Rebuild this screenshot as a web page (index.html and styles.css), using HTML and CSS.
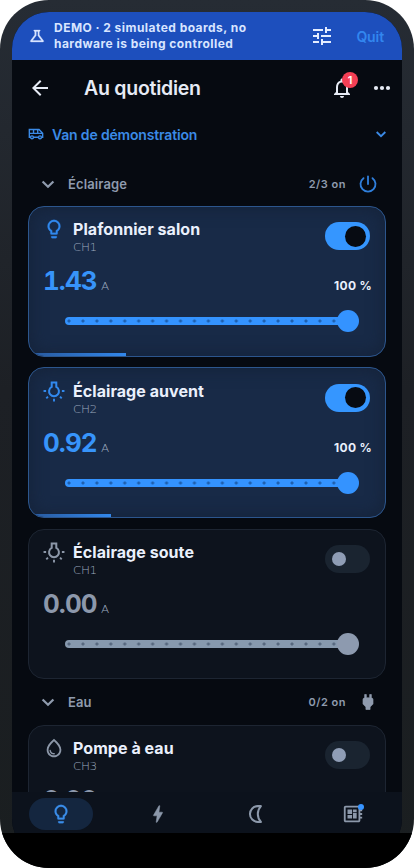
FILE: index.html
```
<!DOCTYPE html>
<html lang="fr">
<head>
<meta charset="utf-8">
<title>Au quotidien</title>
<link rel="stylesheet" href="styles.css">
</head>
<body>
<svg width="0" height="0" class="defs">
  <symbol id="bulb" viewBox="0 0 24 24"><path d="M12,2A7,7 0 0,1 19,9C19,11.38 17.81,13.47 16,14.74V17A1,1 0 0,1 15,18H9A1,1 0 0,1 8,17V14.74C6.19,13.47 5,11.38 5,9A7,7 0 0,1 12,2M9,21V20H15V21A1,1 0 0,1 14,22H10A1,1 0 0,1 9,21M12,4A5,5 0 0,0 7,9C7,11.05 8.23,12.81 10,13.58V16H14V13.58C15.77,12.81 17,11.05 17,9A5,5 0 0,0 12,4Z" stroke="currentColor" stroke-width=".3"/></symbol>
  <symbol id="lamp" viewBox="0 0 24 24"><path d="M9.5 2.6V7.6A5.4 5.4 0 1 0 14.5 7.6V2.6Z" fill="none" stroke="currentColor" stroke-width="2.2"/><path d="M.6 12H3.4M20.6 12H23.4M12 20.4V23.4M5.4 18.2L3.6 20M18.6 18.2L20.4 20" fill="none" stroke="currentColor" stroke-width="2.1"/></symbol>
  <symbol id="drop" viewBox="0 0 24 24"><path d="M12 2c-5.33 4.55-8 8.48-8 11.8 0 4.98 3.8 8.2 8 8.2s8-3.22 8-8.2c0-3.32-2.67-7.25-8-11.8zm0 18c-3.35 0-6-2.57-6-6.2 0-2.34 1.95-5.44 6-9.14 4.05 3.7 6 6.79 6 9.14 0 3.63-2.65 6.2-6 6.2zm-4.17-6c.37 0 .67.26.74.62.41 2.22 2.28 2.98 3.64 2.87.43-.02.79.32.79.75 0 .4-.32.73-.72.75-2.13.13-4.62-1.09-5.19-4.12-.08-.45.28-.87.74-.87z"/></symbol>
  <symbol id="chevron" viewBox="0 0 24 24"><path d="M5.5 9L12 15.3L18.5 9" fill="none" stroke="currentColor" stroke-width="2.7"/></symbol>
</svg>
<div class="phone">
  <div class="screen">
    <div class="banner">
      <svg class="flask" viewBox="0 0 24 24"><path d="M13 11.33L18 18H6l5-6.67V6h2m2.96-2H8.04c-.42 0-.65.48-.39.81L9 6.5v4.17L3.2 18.4c-.49.66-.02 1.6.8 1.6h16c.82 0 1.29-.94.8-1.6L15 10.67V6.5l1.35-1.69c.26-.33.03-.81-.39-.81z" stroke="currentColor" stroke-width=".4"/></svg>
      <div class="banner-text">DEMO · 2 simulated boards, no<br>hardware is being controlled</div>
      <svg class="tune" viewBox="0 0 24 24"><path d="M3 17v2h6v-2H3zM3 5v2h10V5H3zm10 16v-2h8v-2h-8v-2h-2v6h2zM7 9v2H3v2h4v2h2V9H7zm14 4v-2H11v2h10zm-6-4h2V7h4V5h-4V3h-2v6z"/></svg>
      <span class="quit">Quit</span>
    </div>
    <header class="topbar">
      <svg class="back" viewBox="0 0 24 24"><path d="M20 11H7.83l5.59-5.59L12 4l-8 8 8 8 1.41-1.41L7.83 13H20v-2z"/></svg>
      <h1>Au quotidien</h1>
      <div class="bell">
        <svg viewBox="0 0 24 24"><path d="M12 22c1.1 0 2-.9 2-2h-4c0 1.1.89 2 2 2zm6-6v-5c0-3.07-1.64-5.64-4.5-6.32V4c0-.83-.67-1.5-1.5-1.5s-1.5.67-1.5 1.5v.68C7.63 5.36 6 7.92 6 11v5l-2 2v1h16v-1l-2-2zm-2 1H8v-6c0-2.48 1.51-4.5 4-4.5s4 2.02 4 4.5v6z"/></svg>
        <span class="badge">1</span>
      </div>
      <svg class="more" viewBox="0 0 24 24"><circle cx="6" cy="12" r="2.1"/><circle cx="12" cy="12" r="2.1"/><circle cx="18" cy="12" r="2.1"/></svg>
    </header>
    <div class="van">
      <svg class="van-icon" viewBox="0 0 24 24"><g fill="none" stroke="currentColor" stroke-width="2.1"><path d="M3.6 16.8H2V5.2H16.5L22 11V16.8H20.4M8.6 16.8H15.4M2 11H22M8.3 5.2V11M14.6 5.2V11"/><circle cx="6" cy="17" r="2.2"/><circle cx="18" cy="17" r="2.2"/></g></svg>
      <span>Van de démonstration</span>
      <svg class="van-chev"><use href="#chevron"/></svg>
    </div>
    <main>
      <div class="section">
        <svg class="chev"><use href="#chevron"/></svg><span class="name">Éclairage</span><span class="count">2/3 on</span>
        <svg class="act blue" viewBox="0 0 24 24"><path d="M12 2.8V12M6.6 5A9 9 0 1 0 17.4 5" fill="none" stroke="currentColor" stroke-width="2.2" stroke-linecap="round"/></svg>
      </div>
      <div class="card on">
        <div class="head"><svg class="ico"><use href="#bulb"/></svg><div class="titles"><div class="title">Plafonnier salon</div><div class="ch">CH1</div></div><div class="toggle"><i></i></div></div>
        <div class="read"><b>1.43</b><span class="unit">A</span><span class="pct">100 %</span></div>
        <div class="slider"><div class="track"></div><div class="thumb"></div></div>
        <div class="bar" style="width:97px"></div>
      </div>
      <div class="card on">
        <div class="head"><svg class="ico"><use href="#lamp"/></svg><div class="titles"><div class="title">Éclairage auvent</div><div class="ch">CH2</div></div><div class="toggle"><i></i></div></div>
        <div class="read"><b>0.92</b><span class="unit">A</span><span class="pct">100 %</span></div>
        <div class="slider"><div class="track"></div><div class="thumb"></div></div>
        <div class="bar" style="width:82px"></div>
      </div>
      <div class="card">
        <div class="head"><svg class="ico"><use href="#lamp"/></svg><div class="titles"><div class="title">Éclairage soute</div><div class="ch">CH1</div></div><div class="toggle"><i></i></div></div>
        <div class="read"><b>0.00</b><span class="unit">A</span></div>
        <div class="slider"><div class="track"></div><div class="thumb"></div></div>
      </div>
      <div class="section second">
        <svg class="chev"><use href="#chevron"/></svg><span class="name">Eau</span><span class="count">0/2 on</span>
        <svg class="act" viewBox="0 0 24 24"><path d="M16.01 7L16 3h-2v4h-4V3H8v4h-.01C7 6.99 6 7.99 6 8.99v5.49L9.5 18v3h5v-3l3.5-3.51v-5.5c0-1-1-2-1.99-1.99z" stroke="currentColor" stroke-width=".8"/></svg>
      </div>
      <div class="card">
        <div class="head"><svg class="ico"><use href="#drop"/></svg><div class="titles"><div class="title">Pompe à eau</div><div class="ch">CH3</div></div><div class="toggle"><i></i></div></div>
        <div class="read"><b>0.00</b></div>
      </div>
    </main>
    <nav>
      <div class="tab"><span class="pill"><svg><use href="#bulb"/></svg></span></div>
      <div class="tab"><svg viewBox="0 0 24 24"><path d="M11 21h-1l1-7H7.5c-.88 0-.33-.75-.31-.78C8.48 10.94 10.42 7.54 13.01 3h1l-1 7h3.51c.4 0 .62.19.4.66C12.97 17.55 11 21 11 21z" stroke="currentColor" stroke-width=".6"/></svg></div>
      <div class="tab"><svg viewBox="0 0 24 24"><path d="M17.4 3.4H14A8.6 8.6 0 0 0 14 20.6H17.4A12.5 12.5 0 0 1 17.4 3.4Z" fill="none" stroke="currentColor" stroke-width="2.2" stroke-linejoin="round"/></svg></div>
      <div class="tab"><span class="board"><svg viewBox="0 0 24 24"><path d="M22 9V7h-2V5c0-1.1-.9-2-2-2H4c-1.1 0-2 .9-2 2v14c0 1.1.9 2 2 2h14c1.1 0 2-.9 2-2v-2h2v-2h-2v-2h2v-2h-2V9h2zm-4 10H4V5h14v14zM6 13h5v4H6zM12 7h4v3h-4zM6 7h5v5H6zM12 11h4v6h-4z"/></svg><i class="dot"></i></span></div>
    </nav>
  </div>
  <div class="base"></div>
</div>
</body>
</html>
```
FILE: styles.css
```
* { box-sizing: border-box; }
body { margin: 0; background: #fff; font-family: Inter, "Liberation Sans", sans-serif; }
svg { fill: currentColor; flex: none; display: block; }
.defs { position: absolute; }
.phone { position: relative; width: 414px; height: 868px; padding: 12px; border-radius: 49px; overflow: hidden; background: linear-gradient(180deg, #262c34 0%, #1d2025 45%, #1a1e20 100%); }
.screen { height: 844px; border-radius: 37px; overflow: hidden; background: #060a11; display: flex; flex-direction: column; color: #e6ebf5; }
.base { position: absolute; left: 0; right: 0; bottom: 0; height: 35px; background: #000; }

.banner { height: 48px; flex: none; background: #1d4fbd; display: flex; align-items: center; padding: 0 18px 0 16px; color: #d8e5ff; }
.flask { width: 18px; height: 18px; }
.banner-text { margin-left: 8px; font-size: 12px; font-weight: 700; line-height: 16px; letter-spacing: .46px; flex: 1; white-space: nowrap; }
.tune { width: 24px; height: 24px; margin-right: 22px; color: #e4edff; }
.quit { color: #3286ef; font-size: 14px; font-weight: 600; letter-spacing: -.1px; }

.topbar { height: 56px; flex: none; display: flex; align-items: center; padding: 0 8px 0 16px; }
.back { width: 24px; height: 24px; }
h1 { margin: 0 0 0 32px; font-size: 19.5px; font-weight: 600; flex: 1; letter-spacing: -.25px; }
.bell { position: relative; margin-right: 16px; }
.bell svg { width: 24px; height: 24px; }
.badge { position: absolute; left: 12px; top: -4px; width: 16px; height: 16px; border-radius: 50%; background: #f43f55; color: #fff; font-size: 11px; font-weight: 600; line-height: 16px; text-align: center; }
.more { width: 24px; height: 24px; }

.van { height: 36px; flex: none; display: flex; align-items: center; padding: 0 13px 0 16px; color: #3b8ae6; font-size: 14px; font-weight: 600; }
.van span { margin-left: 8px; flex: 1; letter-spacing: -.17px; }
.van-icon { width: 16px; height: 16px; }
.van-chev { width: 16px; height: 16px; }

main { flex: none; height: 640px; overflow: hidden; padding: 10px 16px 0; }
.section { height: 44px; display: flex; align-items: center; padding: 0 8px 0 10px; color: #8f9bae; }
.section.second { height: 46px; }
.chev { width: 20px; height: 20px; }
.name { margin-left: 10px; flex: 1; font-size: 13px; font-weight: 600; letter-spacing: .12px; }
.count { font-size: 11px; font-weight: 600; letter-spacing: .5px; margin-right: 12px; }
.act { width: 20px; height: 20px; }
.act.blue { color: #2f7fdc; }

.card { position: relative; height: 150.5px; border: 1px solid #1d2532; border-radius: 16px; background: #0d131d; overflow: hidden; padding: 11.3px 13px 0 14px; }
main > .card + .card { margin-top: 10.8px; }
.card.on { border-color: #2c568d; background: #182a47; box-shadow: inset 0 0 16px 2px #15233a; }
.ico { width: 22px; height: 22px; color: #8c97a8; }
.on .ico { color: #3189ee; }
.head { display: flex; align-items: flex-start; height: 45px; }
.titles { margin-left: 8px; flex: 1; }
.title { font-size: 16px; font-weight: 700; line-height: 22px; letter-spacing: .06px; color: #eaf0fc; white-space: nowrap; }
.ch, .unit { font-family: "DejaVu Sans Light", "DejaVu Sans", sans-serif; font-weight: 200; font-size: 10px; color: #9ba8bd; transform: scaleX(1.2); transform-origin: 0 50%; }
.ch { line-height: 14px; width: 30px; margin-top: 1px; letter-spacing: -.4px; }
.toggle { width: 45px; height: 28px; margin: 4px 2px 0 0; border-radius: 14px; background: #1a2430; display: flex; align-items: center; padding-left: 7px; }
.toggle i { width: 14px; height: 14px; border-radius: 50%; background: #8f9db5; }
.on .toggle { background: #3596ff; justify-content: flex-end; padding: 0 4px 0 0; }
.on .toggle i { width: 21px; height: 21px; background: #070b12; }
.read { display: flex; align-items: baseline; height: 36px; line-height: 36px; }
.read b { font-size: 26px; font-weight: 650; color: #8c98ab; width: 57.5px; font-variant-numeric: tabular-nums; letter-spacing: -.95px; }
.on .read b { color: #3794fa; }
.pct { margin-left: auto; font-size: 12px; font-weight: 700; letter-spacing: .3px; color: #eaf0fc; }
.slider { height: 22px; margin: 11.2px 13px 0 22px; display: flex; align-items: center; }
.track { flex: 1; height: 8px; border-radius: 4px 0 0 4px; background: radial-gradient(circle at 4px 4px, #56677e 1.2px, transparent 1.9px) 0 0 / 13.95px 8px, #8799ae; margin-right: -8px; }
.thumb { width: 22px; height: 22px; border-radius: 50%; background: #8d9aaf; }
.on .track { background: radial-gradient(circle at 4px 4px, #1e5fae 1.2px, transparent 1.9px) 0 0 / 13.95px 8px, #3493ff; }
.on .thumb { background: #3493ff; }
.bar { position: absolute; left: 0; bottom: 0; height: 3px; background: linear-gradient(90deg, #28589b, #3288ec); }

nav { height: 41px; flex: none; display: flex; background: #0c121c; color: #8c98aa; padding-top: 3px; margin-bottom: 23px; }
.tab { flex: 1; display: flex; justify-content: center; align-items: center; height: 38px; }
.tab svg { width: 22px; height: 22px; }
.pill { width: 64px; height: 32px; border-radius: 16px; background: #14263f; display: flex; align-items: center; justify-content: center; color: #3b8eea; }
.board { position: relative; }
.dot { position: absolute; right: 0; top: 1px; width: 6px; height: 6px; border-radius: 50%; background: #3794ff; }
```
